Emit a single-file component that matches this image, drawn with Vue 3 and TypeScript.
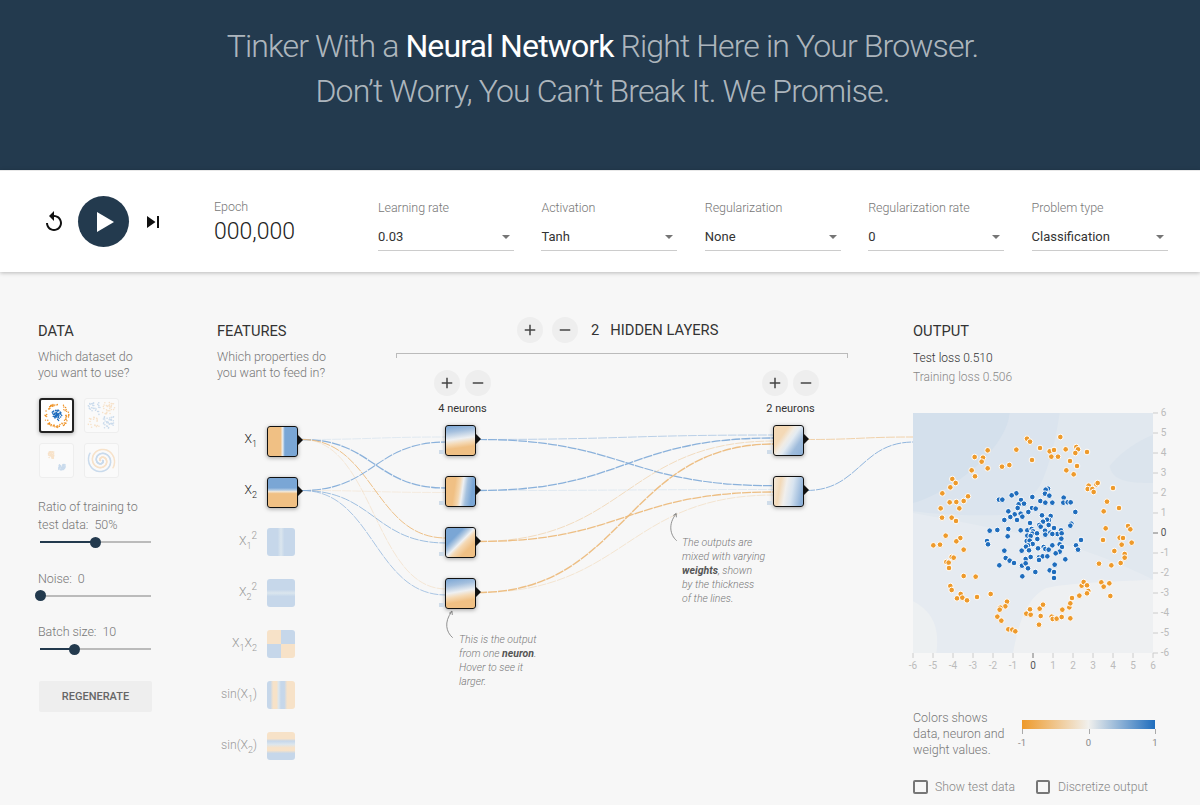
<template>
  <div class="page">
    <header class="hero">
      <h1>Tinker With a <b>Neural Network</b> Right Here in Your Browser.<br />Don’t Worry, You Can’t Break It. We Promise.</h1>
    </header>

    <section class="bar">
      <div class="player">
        <svg class="icon" viewBox="0 0 24 24"><path d="M12 5V1L7 6l5 5V7c3.31 0 6 2.69 6 6s-2.69 6-6 6-6-2.69-6-6H4c0 4.42 3.58 8 8 8s8-3.58 8-8-3.58-8-8-8z" /></svg>
        <div class="play"><span class="play-tri"></span></div>
        <svg class="icon" viewBox="0 0 24 24"><path d="M6 18l8.5-6L6 6v12zM16 6v12h2V6h-2z" /></svg>
      </div>
      <div class="epoch">
        <div class="bar-label">Epoch</div>
        <div class="epoch-num">000,000</div>
      </div>
      <div class="selects">
        <div class="sel" v-for="s in selects" :key="s.label">
          <div class="bar-label">{{ s.label }}</div>
          <div class="sel-box">{{ s.value }}<span class="caret"></span></div>
        </div>
      </div>
    </section>

    <main class="main">
      <svg class="links" viewBox="0 272 1200 533">
        <path v-for="(l, i) in links" :key="i" :d="l.d" fill="none" :stroke="l.c" :stroke-width="l.w" :stroke-opacity="l.o" stroke-dasharray="9 1" />
        <path d="M452.7 637.7C446 632 444 622 451.5 612M449 613.5l3-2.5 .3 4" fill="none" stroke="#777" stroke-width=".8" />
        <path d="M676.7 540.7C670 535 668 524 676 514M673.2 515.5l3-2.2 .2 4" fill="none" stroke="#777" stroke-width=".8" />
      </svg>

      <div class="col col-data">
        <h4>DATA</h4>
        <p class="desc">Which dataset do<br />you want to use?</p>
        <div class="datasets">
          <div v-for="(d, i) in datasets" :key="i" class="ds" :class="{ on: i === 0 }">
            <svg viewBox="0 0 30 30">
              <circle v-for="(p, j) in d" :key="j" :cx="p[0]" :cy="p[1]" r=".7" :fill="p[2] ? '#1f6dbd' : '#ee8f1f'" />
            </svg>
          </div>
        </div>
        <div class="slider-block ratio">
          <label>Ratio of training to<br />test data:&nbsp; 50%</label>
          <div class="slider"><i class="fill" style="width: 50%"></i><i class="knob" style="left: 50%"></i></div>
        </div>
        <div class="slider-block">
          <label>Noise:&nbsp; 0</label>
          <div class="slider"><i class="knob" style="left: 0"></i></div>
        </div>
        <div class="slider-block">
          <label>Batch size:&nbsp; 10</label>
          <div class="slider"><i class="fill" style="width: 31%"></i><i class="knob" style="left: 31%"></i></div>
        </div>
        <div class="regen">REGENERATE</div>
      </div>

      <div class="col col-features">
        <h4>FEATURES</h4>
        <p class="desc">Which properties do<br />you want to feed in?</p>
        <div class="features">
          <div class="feat" v-for="f in features" :key="f.cls" :class="{ off: !f.on }">
            <div class="feat-label">
              <template v-if="f.pre">{{ f.pre }}</template>X<sub>{{ f.sub }}</sub><template v-if="f.sub2">X<sub>{{ f.sub2 }}</sub></template><sup v-if="f.sq">2</sup><template v-if="f.post">{{ f.post }}</template>
            </div>
            <div :class="[f.on ? 'neuron' : 'thumb', f.cls]"></div>
          </div>
        </div>
      </div>

      <div class="col col-hidden">
        <div class="hidden-head">
          <button class="round">
            <svg viewBox="0 0 24 24"><path d="M19 13h-6v6h-2v-6H5v-2h6V5h2v6h6v2z" /></svg>
          </button>
          <button class="round">
            <svg viewBox="0 0 24 24"><path d="M19 13H5v-2h14v2z" /></svg>
          </button>
          <span class="count">2</span>
          <span class="hidden-title">HIDDEN LAYERS</span>
        </div>
        <div class="bracket"></div>
        <div class="layers">
          <div class="layer" v-for="(layer, li) in layers" :key="li">
            <div class="layer-btns">
              <button class="round">
                <svg viewBox="0 0 24 24"><path d="M19 13h-6v6h-2v-6H5v-2h6V5h2v6h6v2z" /></svg>
              </button>
              <button class="round">
                <svg viewBox="0 0 24 24"><path d="M19 13H5v-2h14v2z" /></svg>
              </button>
            </div>
            <div class="layer-count">{{ layer.length }} neurons</div>
            <div class="neuron weighted" v-for="n in layer" :key="n" :class="n"></div>
          </div>
        </div>
        <p class="note note-neuron">This is the output<br />from one <b>neuron</b>.<br />Hover to see it<br />larger.</p>
        <p class="note note-weights">The outputs are<br />mixed with varying<br /><b>weights</b>, shown<br />by the thickness<br />of the lines.</p>
      </div>

      <div class="col col-output">
        <h4>OUTPUT</h4>
        <div class="loss test">Test loss 0.510</div>
        <div class="loss train">Training loss 0.506</div>
        <svg class="heatmap" viewBox="40 40 792 792" width="264" height="264">
          <rect x="40" y="40" width="720" height="720" fill="#e6ebf1" />
          <path d="M40 40H760V540C640 480 500 430 400 410 280 385 150 360 40 340Z" fill="#e1e8ef" />
          <path d="M40 40H480C470 110 450 200 420 260 390 300 360 330 320 345 220 350 120 345 40 335Z" fill="#dbe4ee" />
          <path d="M40 40H330C325 90 290 140 250 180 190 240 110 290 40 310Z" fill="#d4e0ec" />
          <path d="M760 105C700 130 650 170 630 200 640 250 700 250 760 250Z" fill="#dbe4ed" />
          <path d="M340 760C360 650 390 590 440 565 500 550 640 545 760 540V760Z" fill="#eef0f2" />
          <path d="M40 605C110 640 118 700 110 760H40Z" fill="#edf0f2" />
          <g v-for="t in ticks" :key="t">
            <line :x1="tickPos(t)" y1="760" :x2="tickPos(t)" y2="775" :stroke="t === 0 ? '#777' : '#ccc'" stroke-width="3" />
            <text :x="tickPos(t)" y="807" text-anchor="middle" class="tick" :class="{ zero: t === 0 }">{{ t }}</text>
            <line x1="760" :y1="tickPos(-t)" x2="775" :y2="tickPos(-t)" :stroke="t === 0 ? '#777' : '#ccc'" stroke-width="3" />
            <text x="783" :y="tickPos(-t) + 10" class="tick" :class="{ zero: t === 0 }">{{ t }}</text>
          </g>
          <circle v-for="(p, i) in orange" :key="'o' + i" :cx="p[0]" :cy="p[1]" r="8.5" fill="#ee9a2b" stroke="#fff" stroke-width="3" />
          <circle v-for="(p, i) in blue" :key="'b' + i" :cx="p[0]" :cy="p[1]" r="8.5" fill="#1f6dbd" stroke="#fff" stroke-width="3" />
        </svg>
        <div class="legend">
          <p class="legend-text">Colors shows<br />data, neuron and<br />weight values.</p>
          <div class="scale">
            <div class="scale-bar"></div>
            <div class="scale-ticks"><span>-1</span><span>0</span><span>1</span></div>
          </div>
        </div>
        <div class="checks">
          <label class="check"><i></i>Show test data</label>
          <label class="check"><i></i>Discretize output</label>
        </div>
      </div>
    </main>
  </div>
</template>

<script setup lang="ts">
const selects = [
  { label: 'Learning rate', value: '0.03' },
  { label: 'Activation', value: 'Tanh' },
  { label: 'Regularization', value: 'None' },
  { label: 'Regularization rate', value: '0' },
  { label: 'Problem type', value: 'Classification' }
]

const features = [
  { cls: 'fx1', sub: '1', on: true },
  { cls: 'fx2', sub: '2', on: true },
  { cls: 'fx1sq', sub: '1', sq: true },
  { cls: 'fx2sq', sub: '2', sq: true },
  { cls: 'fxx', sub: '1', sub2: '2' },
  { cls: 'fsin1', pre: 'sin(', sub: '1', post: ')' },
  { cls: 'fsin2', pre: 'sin(', sub: '2', post: ')' }
] as { cls: string; sub: string; sub2?: string; sq?: boolean; on?: boolean; pre?: string; post?: string }[]

const layers = [
  ['n1', 'n2', 'n3', 'n4'],
  ['m1', 'm2']
]

const BLUE = '#84add9'
const ORANGE = '#ecba7c'

function curve(x0: number, y0: number, x1: number, y1: number) {
  const mid = (x0 + x1) / 2
  return `M${x0} ${y0}C${mid} ${y0} ${mid} ${y1} ${x1} ${y1}`
}

function link(x0: number, y0: number, x1: number, y1: number, c: string, w: number, o: number) {
  return { d: curve(x0, y0, x1, y1), c, w, o }
}

const links = [
  link(302, 439.5, 446, 437, BLUE, 1, 0.2),
  link(302, 439.5, 446, 488, BLUE, 1.3, 0.95),
  link(302, 439.5, 446, 538, ORANGE, 1, 0.9),
  link(302, 439.5, 446, 589, ORANGE, 0.8, 0.35),
  link(302, 490.5, 446, 442, BLUE, 1.1, 0.95),
  link(302, 490.5, 446, 492.5, ORANGE, 0.8, 0.25),
  link(302, 490.5, 446, 543, BLUE, 0.9, 0.85),
  link(302, 490.5, 446, 595, BLUE, 0.9, 0.75),
  link(478, 439.5, 774, 435, BLUE, 0.9, 0.6),
  link(478, 439.5, 774, 485.7, BLUE, 1.2, 0.95),
  link(478, 490.5, 774, 438, BLUE, 1.3, 0.95),
  link(478, 490.5, 774, 489.5, BLUE, 0.8, 0.25),
  link(478, 541.5, 774, 441, ORANGE, 0.9, 0.5),
  link(478, 541.5, 774, 492, ORANGE, 1.3, 0.95),
  link(478, 592.5, 774, 444, ORANGE, 1.4, 0.95),
  link(478, 592.5, 774, 495, ORANGE, 0.9, 0.35),
  link(806, 439.5, 914, 437, ORANGE, 0.9, 0.7),
  link(806, 490.5, 914, 442, BLUE, 1, 0.9)
]

const ticks = [-6, -5, -4, -3, -2, -1, 0, 1, 2, 3, 4, 5, 6]
const tickPos = (t: number) => 400 + t * 60

// dot positions read off the chart, in 3x pixels
const orange = [
  [382,117],[391,126],[482,112],[421,145],[350,150],[264,152],[450,155],[463,151],[498,149],[530,142],[535,149],[527,160],[562,157],[455,171],[475,171],[397,181],[511,184],[225,172],[250,174],[246,186],[264,206],[216,212],[226,230],[307,201],[329,196],[500,212],[532,199],[522,224],
  [158,238],[168,250],[152,263],[128,281],[205,290],[192,304],[170,307],[150,308],[123,326],[179,326],[127,354],[156,354],[169,364],[567,258],[564,268],[578,268],[582,277],[590,254],[594,250],[640,265],[622,306],[612,335],[658,325],[618,386],[685,379],[692,389],[610,421],[660,414],[670,415],[666,435],[696,429],[644,454],[675,463],[675,474],[663,490],[635,497],[598,492],
  [138,408],[182,415],[170,425],[101,437],[121,435],[192,450],[156,472],[162,474],[140,487],[147,489],[148,505],[192,529],[228,531],[152,559],[156,571],[183,583],[172,596],[188,594],[202,602],[232,592],[273,583],[322,606],[317,620],[302,624],[300,630],[293,651],[305,663],[326,689],[338,690],[347,695],
  [380,642],[393,645],[391,629],[420,627],[430,615],[423,649],[418,675],[456,651],[459,658],[471,657],[486,652],[512,656],[488,630],[509,623],[512,611],[517,595],[539,588],[546,558],[552,547],[562,557],[566,574],[562,581],[605,548],[612,561],[629,551],[632,589]
]
const blue = [
  [350,281],[336,287],[298,300],[308,300],[364,301],[398,292],[422,304],[437,309],[458,309],[492,294],[491,309],[504,308],[513,308],[527,337],[357,314],[373,312],[354,325],[326,335],[397,325],[408,327],[345,344],[363,342],[332,352],[368,351],[352,361],[314,361],[386,337],[427,347],[453,349],[448,361],[442,360],[430,366],[391,370],[419,376],[447,376],[445,267],[438,270],[436,282],[449,288],[515,372],[512,378],
  [270,393],[293,391],[326,388],[324,410],[363,392],[383,392],[396,388],[400,395],[398,402],[412,401],[383,408],[393,409],[423,381],[436,393],[452,399],[463,385],[473,403],[458,403],[484,392],[486,401],[485,417],[381,424],[390,423],[399,433],[413,418],[437,405],[385,437],[379,441],[415,446],[432,442],[437,448],[458,437],[480,434],[487,442],[544,421],[529,437],[535,450],[262,424],[265,434],
  [314,453],[366,453],[388,452],[447,450],[480,456],[468,461],[318,475],[330,483],[343,490],[378,478],[393,472],[418,473],[429,470],[443,470],[418,481],[497,479],[299,497],[367,498],[378,491],[385,506],[465,495],[450,512],[463,517],[407,517],[368,530],[463,535]
]

// small dataset previews, from a fixed seed so they never change
let seed = 7
const rnd = () => {
  seed = (seed * 16807) % 2147483647
  return seed / 2147483647
}
type Dot = [number, number, number]
const circleSet: Dot[] = []
const xorSet: Dot[] = []
const gaussSet: Dot[] = []
const spiralSet: Dot[] = []
for (let i = 0; i < 70; i++) {
  const a = rnd() * Math.PI * 2
  const r = rnd() * 5.5
  circleSet.push([15 + Math.cos(a) * r, 15 + Math.sin(a) * r, 1])
  const b = rnd() * Math.PI * 2
  const q = 9 + rnd() * 3
  circleSet.push([15 + Math.cos(b) * q, 15 + Math.sin(b) * q, 0])
}
for (let i = 0; i < 130; i++) {
  const x = 3 + rnd() * 24
  const y = 3 + rnd() * 24
  if (Math.abs(x - 15) < 1 || Math.abs(y - 15) < 1) continue
  xorSet.push([x, y, (x - 15) * (y - 15) < 0 ? 0 : 1])
}
for (let i = 0; i < 50; i++) {
  gaussSet.push([20 + (rnd() - 0.5) * 6, 21 + (rnd() - 0.5) * 5, 1])
  gaussSet.push([10 + (rnd() - 0.5) * 5, 10 + (rnd() - 0.5) * 6, 0])
}
for (let i = 0; i < 160; i++) {
  const t = (i / 160) * 3.2 * Math.PI
  const r = 1 + (i / 160) * 11.5
  spiralSet.push([15 + Math.cos(t) * r, 15 + Math.sin(t) * r, 1])
  spiralSet.push([15 - Math.cos(t) * r, 15 - Math.sin(t) * r, 0])
}
const datasets = [circleSet, xorSet, gaussSet, spiralSet]
</script>

<style>
html,
body {
  margin: 0;
  background: #f7f7f7;
  overflow: hidden;
}
</style>

<style scoped>
.page {
  font-family: Roboto, 'Liberation Sans', sans-serif;
  font-weight: 300;
  color: #333;
  height: 805px;
  overflow: hidden;
  background: #f7f7f7;
}
.hero {
  height: 170px;
  box-sizing: border-box;
  padding: 24px 0 0 5px;
  background: #233a4e;
  text-align: center;
}
.hero h1 {
  margin: 0;
  font-size: 32px;
  line-height: 45px;
  font-weight: 300;
  color: rgba(255, 255, 255, 0.65);
  letter-spacing: -0.87px;
}
.hero b {
  font-weight: 400;
  color: #fff;
}
.bar {
  height: 102px;
  box-sizing: border-box;
  border-top: 1px solid #e8e8e8;
  background: #fff;
  box-shadow: 0 1px 4px rgba(0, 0, 0, 0.25);
  display: flex;
  align-items: center;
  position: relative;
  z-index: 2;
}
.player {
  display: flex;
  align-items: center;
  margin-left: 42px;
  width: 172px;
  gap: 12px;
}
.icon {
  width: 24px;
  height: 24px;
  fill: #111;
}
.play {
  width: 51px;
  height: 51px;
  border-radius: 50%;
  background: #233a4e;
  display: flex;
  align-items: center;
  justify-content: center;
}
.play-tri {
  width: 0;
  height: 0;
  margin-left: 3px;
  border-left: 17px solid #fff;
  border-top: 10px solid transparent;
  border-bottom: 10px solid transparent;
}
.epoch {
  width: 164px;
}
.bar-label {
  font-size: 12.5px;
  letter-spacing: -0.05px;
  line-height: 16px;
  color: #777;
  margin-bottom: 6px;
}
.epoch-num {
  font-size: 23px;
  line-height: 24px;
  margin-top: -1px;
  color: #222;
}
.selects {
  display: flex;
  gap: 27.4px;
  padding-top: 7px;
}
.sel {
  width: 136px;
}
.sel-box {
  position: relative;
  font-size: 13px;
  line-height: 20px;
  padding-top: 5px;
  padding-bottom: 3px;
  border-bottom: 1px solid #ccc;
  color: #333;
  font-weight: 400;
}
.caret {
  position: absolute;
  right: 4px;
  top: 13px;
  border-top: 4px solid #757575;
  border-left: 4.5px solid transparent;
  border-right: 4.5px solid transparent;
}

.main {
  position: relative;
  display: flex;
  height: 533px;
  box-sizing: border-box;
  padding: 50px 0 0 38px;
}
.links {
  position: absolute;
  left: 0;
  top: 0;
  width: 1200px;
  height: 533px;
  z-index: 0;
}
.col {
  position: relative;
  z-index: 1;
  box-sizing: border-box;
}
.col-data {
  width: 179px;
}
.col-features {
  width: 179px;
}
.col-hidden {
  width: 517px;
}
.col-output {
  width: 270px;
}
h4 {
  margin: 0;
  font-size: 14.7px;
  line-height: 18px;
  font-weight: 400;
  color: #333;
}
.desc {
  margin: 9px 0 0;
  font-size: 12.5px;
  letter-spacing: -0.05px;
  line-height: 16px;
  color: #777;
}
.datasets {
  display: grid;
  grid-template-columns: 35px 35px;
  grid-auto-rows: 35px;
  gap: 10px;
  margin-top: 17px;
  margin-left: 1px;
}
.ds {
  box-sizing: border-box;
  border: 1px solid #eee;
  border-radius: 3px;
  background: rgba(255, 255, 255, 0.4);
}
.ds svg {
  display: block;
  width: 100%;
  height: 100%;
  opacity: 0.22;
}
.ds.on {
  background: #fff;
  border: 2px solid #222;
  box-shadow: 0 1px 4px rgba(0, 0, 0, 0.3);
}
.ds.on svg {
  opacity: 1;
}
.slider-block {
  width: 113px;
  margin-top: 26.5px;
}
.slider-block.ratio {
  margin-top: 20px;
}
.slider-block label {
  display: block;
  font-size: 12.5px;
  letter-spacing: -0.05px;
  line-height: 18px;
  color: #777;
}
.slider {
  position: relative;
  height: 2px;
  width: 111px;
  margin: 7px 0 0 2px;
  background: #bbb;
}
.fill {
  position: absolute;
  left: 0;
  top: 0;
  height: 2px;
  background: #233a4e;
}
.knob {
  position: absolute;
  top: -4.5px;
  width: 11px;
  height: 11px;
  margin-left: -5.5px;
  border-radius: 50%;
  background: #233a4e;
}
.regen {
  width: 113px;
  height: 31px;
  margin-top: 31px;
  margin-left: 1px;
  border-radius: 2px;
  background: #eee;
  color: #666;
  font-size: 11px;
  font-weight: 500;
  line-height: 31px;
  text-align: center;
}
.features {
  margin-top: 45px;
}
.feat {
  display: flex;
  height: 51px;
  align-items: flex-start;
  gap: 10px;
}
.feat-label {
  width: 40px;
  white-space: nowrap;
  direction: rtl;
  unicode-bidi: plaintext;
  text-align: right;
  font-size: 12.2px;
  line-height: 27px;
  color: #222;
  font-weight: 300;
}
.feat.off .feat-label {
  color: #999;
}
.feat-label sub {
  font-size: 9px;
  line-height: 0;
  vertical-align: -4px;
}
.feat-label sup {
  font-size: 10px;
  line-height: 0;
  vertical-align: 6px;
}
.neuron {
  position: relative;
  box-sizing: border-box;
  width: 30.5px;
  height: 30.5px;
  margin-bottom: 20.5px;
  border: 1px solid #111;
  border-radius: 3px;
  box-shadow: 0 1px 4px rgba(0, 0, 0, 0.35);
}
.neuron::after {
  content: '';
  position: absolute;
  right: -6px;
  top: 8px;
  border-left: 5px solid #111;
  border-top: 5px solid transparent;
  border-bottom: 5px solid transparent;
}
.neuron.weighted::before {
  content: '';
  position: absolute;
  left: -7px;
  bottom: 1px;
  width: 5px;
  height: 4px;
  background: #cfdce9;
}
.thumb {
  width: 28px;
  height: 28px;
  border-radius: 3px;
  overflow: hidden;
}
.fx1 {
  background: linear-gradient(90deg, #f0c084 0 44%, #f3e3cf 48%, #e4ecf3 51%, #7aa6d5 58%, #7aa6d5 100%);
}
.fx2 {
  background: linear-gradient(180deg, #7aa6d5 0 34%, #b6cde4 42%, #f3e6d3 47%, #f0c084 54%, #f0c084 100%);
}
.n1 {
  background: linear-gradient(172deg, #7aa6d5 0, #a5c0de 20%, #eef0f2 44%, #f5d9b4 58%, #f0c084 72%);
}
.n2 {
  background: linear-gradient(98deg, #f0c084 0 30%, #f4d7b0 45%, #eef0f2 55%, #a6c2df 68%, #7aa6d5 85%);
}
.n3 {
  background: linear-gradient(135deg, #7aa6d5 0 30%, #b9cee4 42%, #eef0f2 50%, #f5d9b4 58%, #f0c084 75%);
}
.n4 {
  background: linear-gradient(170deg, #7aa6d5 0, #a5c0de 22%, #eef0f2 44%, #f5d9b4 58%, #f0c084 74%);
}
.m1 {
  background: linear-gradient(125deg, #f4d9b6 0 30%, #f1ece4 44%, #e3ebf2 55%, #9fbcdc 75%, #8eb1d8 100%);
}
.m2 {
  background: linear-gradient(100deg, #f3e8d9 0, #f2d9b8 22%, #f1efec 40%, #d8e4f0 60%, #8eb1d8 92%);
}
.fx1sq {
  background: linear-gradient(90deg, #c6d7ea 0 38%, #dbe6ee 50%, #c6d7ea 62%);
}
.fx2sq {
  background: linear-gradient(180deg, #c6d7ea 0 38%, #dbe6ee 50%, #c6d7ea 62%);
}
.fxx {
  background: conic-gradient(#c6d7ea 0 90deg, #f7e2c8 90deg 180deg, #c6d7ea 180deg 270deg, #f7e2c8 270deg);
}
.fsin1 {
  background: linear-gradient(90deg, #c6d7ea 0 12%, #f7e2c8 22% 34%, #dbe6ee 42%, #c6d7ea 50% 62%, #f7e2c8 72% 100%);
}
.fsin2 {
  background: linear-gradient(180deg, #f7e2c8 0 24%, #c6d7ea 32%, #dbe6ee 44%, #f7e2c8 56% 66%, #c6d7ea 76% 100%);
}
.hidden-head {
  display: flex;
  align-items: center;
  width: 451px;
  padding-left: 121px;
  box-sizing: border-box;
  height: 26px;
  margin-top: -5px;
  gap: 9px;
}
.count {
  font-size: 14.7px;
  font-weight: 400;
  margin-left: 4px;
  color: #333;
}
.hidden-title {
  font-size: 14.7px;
  font-weight: 400;
  color: #333;
  margin-left: 2px;
}
.round {
  width: 26px;
  height: 26px;
  padding: 4px;
  border: 0;
  border-radius: 50%;
  background: #eee;
  display: flex;
  align-items: center;
  justify-content: center;
}
.round svg {
  width: 18px;
  height: 18px;
  fill: #444;
}
.bracket {
  box-sizing: border-box;
  width: 452px;
  height: 5px;
  margin-top: 10px;
  border: 1px solid #bbb;
  border-bottom: 0;
}
.layers {
  display: flex;
  gap: 271px;
  margin-top: 12px;
  margin-left: 38px;
}
.layer {
  width: 57px;
}
.layer-btns {
  display: flex;
  gap: 5px;
}
.layer-count {
  font-size: 11px;
  font-weight: 400;
  line-height: 14px;
  margin: 6px -10px 9px;
  text-align: center;
  color: #333;
  white-space: nowrap;
}
.layer .neuron {
  margin-left: 11px;
}
.note {
  position: absolute;
  margin: 0;
  font-size: 10.5px;
  line-height: 14px;
  font-style: italic;
  color: #777;
  white-space: nowrap;
}
.note b {
  font-weight: 700;
  color: #555;
}
.note-neuron {
  left: 63px;
  top: 311px;
}
.note-weights {
  left: 286px;
  top: 214px;
}
.loss {
  font-size: 12px;
  line-height: 19px;
}
.test {
  margin-top: 9px;
  color: #333;
}
.train {
  color: #888;
}
.heatmap {
  display: block;
  margin-top: 26px;
  overflow: visible;
}
.tick {
  font-size: 30px;
  fill: #bbb;
  font-weight: 400;
}
.tick.zero {
  fill: #555;
}
.legend {
  display: flex;
  margin-top: 33px;
  gap: 0;
}
.legend-text {
  margin: 0;
  width: 109px;
  font-size: 12.5px;
  line-height: 16px;
  color: #777;
}
.scale {
  width: 133px;
  padding-top: 10px;
}
.scale-bar {
  height: 9px;
  background: linear-gradient(90deg, #ee9a2b 0, #f1f0ed 50%, #1f6dbd 100%);
}
.scale-ticks {
  display: flex;
  justify-content: space-between;
  font-size: 9.5px;
  font-weight: 400;
  line-height: 12px;
  margin-top: 8px;
  color: #888;
}
.scale-ticks span {
  position: relative;
  width: 0;
  display: flex;
  justify-content: center;
}
.scale-ticks span::before {
  content: '';
  position: absolute;
  top: -8px;
  left: 0;
  width: 1px;
  height: 5px;
  background: #aaa;
}
.checks {
  display: flex;
  gap: 21px;
  margin-top: 21px;
}
.check {
  display: flex;
  align-items: center;
  gap: 7.5px;
  font-size: 12.2px;
  line-height: 16px;
  color: #888;
}
.check i {
  box-sizing: border-box;
  display: block;
  width: 14.5px;
  height: 14.5px;
  border: 2px solid #777;
  border-radius: 2px;
}
</style>
